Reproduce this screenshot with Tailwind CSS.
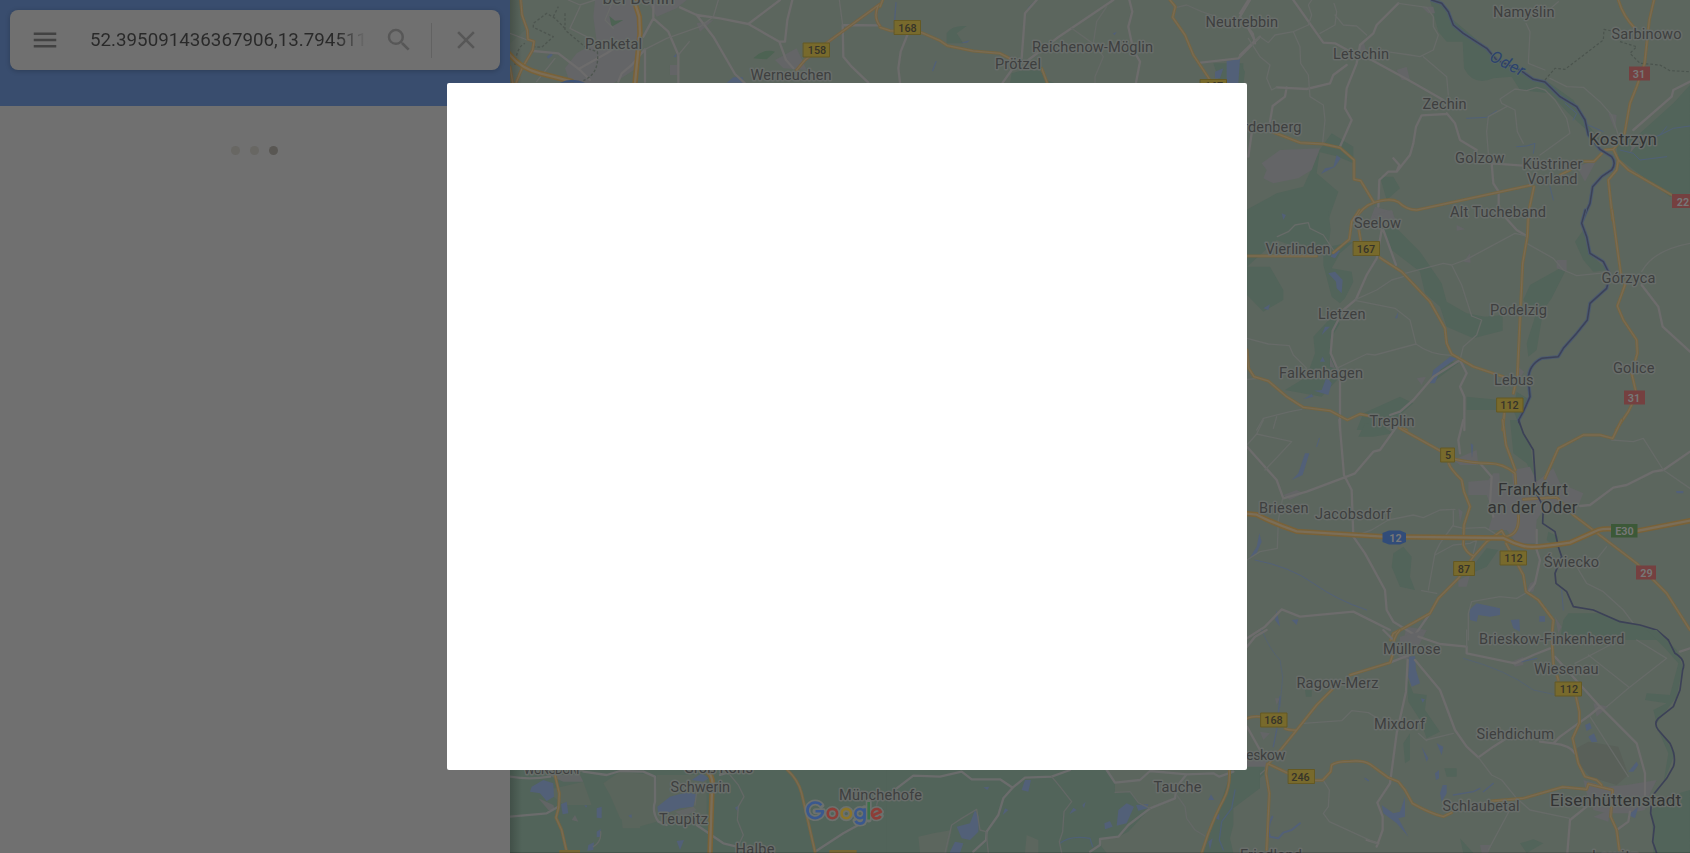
<!DOCTYPE html>
<html lang="en">
<head>
<meta charset="utf-8">
<title>Google Maps</title>
<script src="https://cdn.jsdelivr.net/npm/@tailwindcss/browser@4"></script>
</head>
<body class="relative flex h-screen w-screen overflow-hidden bg-[#707070] font-[Roboto,sans-serif]">

<aside class="h-full w-[510px] shrink-0 bg-[#707070]">
  <header class="h-[106px] bg-[#394d6e] p-[10px]">
    <div class="flex h-[60px] items-center rounded-lg bg-[#707070] pl-5 pr-[19px] shadow-[0_1px_5px_rgba(0,0,0,0.22)]">
      <svg class="size-[30px] shrink-0 fill-[#424242]" viewBox="0 0 24 24"><path d="M3 18h18v-2H3v2zm0-5h18v-2H3v2zm0-7v2h18V6H3z"/></svg>
      <div class="ml-[30px] w-[280px] overflow-hidden whitespace-nowrap bg-linear-to-r from-[#292929] from-88% to-[#707070] to-99% bg-clip-text text-[18.75px] leading-[30px] text-transparent">52.395091436367906,13.794511413</div>
      <svg class="ml-[14px] size-[30px] shrink-0 fill-[#575757]" viewBox="0 0 24 24"><path d="M15.5 14h-.79l-.28-.27A6.471 6.471 0 0 0 16 9.500 6.500 6.500 0 1 0 9.500 16c1.610 0 3.090-.59 4.230-1.570l.27.28v.79l5 4.990L20.490 19l-4.990-5zm-6 0C7.010 14 5 11.990 5 9.500S7.010 5 9.500 5 14 7.010 14 9.500 11.990 14 9.500 14z"/></svg>
      <div class="ml-[17px] h-[35px] w-px bg-[#626262]"></div>
      <svg class="ml-[19px] size-[30px] shrink-0 fill-[#575757]" viewBox="0 0 24 24"><path d="M19 6.410L17.590 5 12 10.590 6.410 5 5 6.410 10.590 12 5 17.590 6.410 19 12 13.410 17.590 19 19 17.590 13.410 12z"/></svg>
    </div>
  </header>
  <div class="flex justify-center gap-[10px] pt-[39.500px] pr-px">
    <i class="size-[9px] rounded-full bg-[#686763]"></i>
    <i class="size-[9px] rounded-full bg-[#686763]"></i>
    <i class="size-[9px] rounded-full bg-[#595753]"></i>
  </div>
</aside>

<main class="h-full flex-1 bg-[#5c665e]">
<svg class="block h-full w-full" viewBox="510 0 1180 853" fill="none" stroke-linejoin="round" stroke-linecap="round">
<defs>
  <linearGradient id="edge"><stop offset="0" stop-opacity=".2"/><stop offset="1" stop-opacity="0"/></linearGradient>
  <path id="o-nw" d="M62 0L66 45 82 90 84 118 102 124 98 150 66 205 48 248M30 200L38 248M1140 12L985 125M985 125L915 180 890 210M1136 15Q1118 50 1140 78"/>
  <path id="a-nw" d="M402 0L418 50 420 100 405 248M26 160Q60 205 120 220T215 244"/>
  <path id="o-n" d="M0 82L30 92 125 98 180 122 202 137 280 153 360 160 395 178M485 205L502 250M870 0L886 20 878 52 915 105 940 165 990 240M8 0L0 20"/>
  <path id="o-ne" d="M98 396L180 428 250 432 300 443 342 480 342 538 362 542 402 608M345 660Q365 620 402 608 450 592 475 606 500 630 530 630L875 555M1135 0Q1150 50 1185 85M1242 0L1228 60 1214 190 1190 260 1170 310 1152 410 1120 448 1095 450 1062 484 1010 484M1120 448L1135 480 1165 510 1295 585M1135 480L1130 510 1105 540 1118 660M960 525L990 510M882 560L868 625"/>
  <path id="o-e" d="M358 0L335 35 328 88 280 128M230 138H21M355 50L362 92M420 143L485 185 570 275 615 355 620 400 635 432 700 470 790 500M865 20L862 80 848 160 832 500 820 550M793 610L788 660M1116 0L1142 188 1155 225 1132 288 1150 330 1190 390 1192 430 1175 490 1190 555 1165 605 1128 660M21 420L26 475 42 500 85 513 140 560 190 592 270 602 322 630 360 612 400 620M478 652L500 660"/>
  <path id="o-se" d="M480 25L600 92M645 118Q700 130 745 130T825 160L828 205M788 0L798 75 826 150M626 130Q630 145 665 180L672 215 690 260 672 315 670 375Q680 400 700 408M835 285Q840 345 795 350L785 332 740 365 700 410 655 475 595 535 570 580 490 625 460 640 452 660M798 370L850 465 858 515 895 540 940 600 935 660M1145 0L1118 55 1080 45 1030 45 955 85 915 175M850 238L950 232 1000 285 1190 430 1280 520 1350 630"/>
  <path id="a-se" d="M21 281L50 284Q100 310 170 334L430 350 790 354Q820 370 850 378T990 368L1075 330Q1090 325 1120 327M1190 333L1350 302"/>
  <path id="o-s" d="M480 0Q455 25 458 75L450 98 330 135M280 175L230 225 170 300 120 362 85 402 145 430M225 451L248 451 272 425 275 405Q290 394 330 394 370 390 390 403L445 443 475 455 495 480 517 520Q570 550 610 560L635 548M21 265Q35 258 60 260M135 296Q150 302 170 300M82 402L78 430 88 490 80 660M745 514L850 505 968 471 1040 478 1045 462 1118 480 1112 560 1130 600 1138 660M935 10L940 100 955 150M1008 200L1018 245 1018 280 998 325 1015 400 1035 440 1070 450 1085 465"/>
  <path id="o-sw" d="M165 60L178 115 176 158 168 188 185 225 200 290M862 45Q895 75 905 115L945 290"/>
  <path id="a-sw" d="M622 50Q642 65 636 105L630 294"/>
  <path id="o-ss" d="M1048 45Q1052 95 1030 135T985 235L965 294"/>
  <path id="r-ne" d="M575 0L605 10 625 35 640 75 670 100 740 145 770 180 840 210 880 238 915 246 960 290 1010 320 1035 360 1045 405 1080 448 1115 470Q1130 490 1115 510L1085 530 1058 560 1050 610 1028 660"/>
  <path id="r-e" d="M1036 0L1025 40 1040 80 1050 130 1090 155 1110 195 1100 235 1050 280 1042 330 1010 370 970 415 955 440 905 445Q865 465 865 510L870 560 850 605 836 630 838 660"/>
</defs>

<!-- north west -->
<g transform="translate(500 0) scale(.33333)">
  <path fill="#58655c" d="M30 0H60L75 90 30 130z"/>
  <path fill="#646567" d="M285 0H410L430 120 410 205 340 250H210L195 205 230 160 290 125 280 50zM440 0H560L530 25 470 50zM825 180L890 145 920 210 850 205zM510 195H535V225H510zM590 70L640 60 600 95z"/>
  <path fill="#4d6353" d="M328 48L345 62 370 60 335 80zM760 175Q790 145 825 155L800 178z"/>
  <path fill="#526078" d="M680 248L700 232H728L732 248zM140 170L155 158 158 166 145 176zM520 170L530 160 528 172z"/>
  <g stroke="#6d6c6c" stroke-width="7"><path d="M460 0V55L505 95 535 165V250M460 55L430 110M540 22L590 45 660 55 745 72 840 0M590 45L640 110 705 222 735 250M745 72L838 125 858 180 880 205M877 0L862 60 855 125 838 125M1028 75L1030 170 1055 200 1105 248M1028 75L1140 76M100 153L175 160 240 210M240 210L270 240M240 205L320 160 350 140M355 245L365 220 395 195 435 148V245"/></g>
  <g stroke="#696b69" stroke-width="4"><path d="M205 0L240 15 285 0M240 20L210 85 260 110M340 0L315 60 340 85M435 148L500 115 600 80 640 50 655 0M1018 0L1028 75M110 245L165 175M535 165L568 125M30 100L82 120"/></g>
  <g stroke="#4e5650" stroke-width="4" stroke-dasharray="8 6" stroke-linecap="butt"><path d="M45 195Q50 140 75 130M160 50L175 20M195 85L165 55 140 40 100 70 100 82 160 110 125 142 100 140M195 40V90L260 145 292 155Q300 220 250 242"/></g>
  <use href="#o-nw" stroke="#756241" stroke-width="9"/><use href="#o-nw" stroke="#7a6b52" stroke-width="4"/>
  <use href="#a-nw" stroke="#7a6238" stroke-width="16"/><use href="#a-nw" stroke="#7b6d56" stroke-width="7"/>
  <path fill="#3d5275" d="M180 248Q215 230 255 248z"/>
</g>

<!-- north -->
<g transform="translate(880 0) scale(.33333)">
  <path fill="#52645a" d="M200 100Q215 75 260 78L230 100 250 130 200 130zM395 220L430 210 480 212 500 240 525 250H390zM1000 190H1090V250H1020z"/>
  <path fill="#526078" d="M1040 182L1080 178 1075 250H1040zM1005 215L1030 205 1020 235 1005 235zM698 100L710 96 704 106zM240 130L270 120 262 128z"/>
  <path stroke="#526078" stroke-width="4" d="M48 8L44 60M168 185L158 212M470 0L445 25"/>
  <g stroke="#6d6c6c" stroke-width="7"><path d="M470 0L435 40 425 175M445 180L530 115 700 0M395 210L368 248M82 105L62 155 55 205 60 248M748 0L757 35 745 80 760 150 780 185 768 248M962 188L1075 175 1140 110M1110 0L1080 50 1118 100 1125 130"/></g>
  <g stroke="#656966" stroke-width="4"><path d="M575 85L635 128M680 20L650 65 640 130 670 170 645 230V248M890 22L920 15 965 35 1010 50"/></g>
  <use href="#o-n" stroke="#756541" stroke-width="9"/><use href="#o-n" stroke="#7a6b52" stroke-width="4"/>
</g>

<!-- north east -->
<g transform="translate(1240 0) scale(.33333)">
  <g fill="#52645a">
    <path d="M570 0H600L640 60 700 110 780 180 860 225 930 250 1000 300 1040 370 1090 430 1050 400 985 340 930 280 840 270 815 230 760 235Q700 260 672 205L668 125 620 125 595 95zM1350 255L1300 310 1200 400 1130 440 1135 475 1290 590 1350 580zM235 455L275 400 340 440V490L295 470zM0 640L110 580 190 560 240 450 230 520 295 575 265 660H0zM420 530H460L480 565 440 600zM0 190L15 215 10 250H0z"/></g>
  <path fill="#646567" d="M65 490L120 450 240 445 215 510 175 535 100 550 70 535 80 510zM370 120L380 160 350 165zM470 210L500 200 510 240 485 240zM545 20H580L585 40 565 40zM405 620L460 635 450 660H390zM1010 500L1070 480 1035 545zM1105 340L1130 345 1125 390zM1180 420L1220 400 1170 460z"/>
  <path fill="#526078" d="M243 522L255 505 280 500 290 465 302 475 285 500z"/>
  <g stroke="#4f6078" stroke-width="3"><path d="M680 355L740 352 770 332M830 440L860 438 885 430 880 460M1140 450L1180 460 1200 480 1280 470M1220 420L1260 405 1300 385 1350 378M975 310L1010 340 1000 360M1045 375L1090 395M930 560L940 600M1260 405L1280 380"/></g>
  <g stroke="#6d6c6c" stroke-width="7"><path d="M160 0L250 128 285 130 355 168 395 180 505 240 610 300M475 10L410 75 400 100 360 135 350 190 320 265 315 325 335 360 300 440M320 195L280 225 270 250 200 267 110 262M0 165L45 122 25 85M0 40L25 0M140 262L135 290 98 318 90 365M620 342L545 346 528 380 520 430 510 465 470 515 445 515 418 540 415 620M620 340L645 370 660 420 710 450M755 490L760 550 776 575V620M755 490L850 497M1350 245L1300 270 1295 290 1180 390M460 475L478 495 470 515M35 400L25 470"/></g>
  <g stroke="#676b68" stroke-width="4"><path d="M475 10L560 22 580 50 580 80 595 105 580 150 540 170 510 165 440 155 380 158M550 170L620 230 625 285M160 95L180 140 182 190 205 225 210 290 250 315 255 360 248 428M25 115L60 170 90 195 80 235 95 270 110 262M45 122L60 110 85 128 105 105 160 95 205 75 215 45 205 15 215 0M240 100L285 75 290 35 282 10M285 45L310 75 350 78 380 105M955 5L920 35M858 70L870 95 865 190 915 210M930 235L980 260 1030 262 1080 305 1115 345 1135 405M915 270L890 262 860 272 825 267 780 297 785 310 825 330 832 395 850 430M915 270L945 300 980 355 990 400 900 465M800 320L745 350 740 395 745 460"/></g>
  <g stroke="#4b544e" stroke-width="3.500" stroke-dasharray="8 6" stroke-linecap="butt"><path d="M915 240L945 205 975 208 1090 120 1092 88 1125 95M1140 125L1190 140 1170 160 1200 190 1260 195 1290 212 1350 215"/></g>
  <use href="#o-ne" stroke="#756541" stroke-width="9"/><use href="#o-ne" stroke="#7a6b52" stroke-width="4"/>
  <use href="#r-ne" stroke="#4c5b71" stroke-width="10"/><use href="#r-ne" stroke="#3c4157" stroke-width="4.500"/>
</g>

<!-- east -->
<g transform="translate(1240 210) scale(.33333)">
  <g fill="#52645a"><path d="M21 0H265L272 60 265 110 340 95 300 130 275 175 335 185 340 215 315 265 300 280 275 260 250 165 250 130 190 120 110 90 21 170zM21 170H90L130 240V270L70 305 21 255zM430 55H470L540 125 605 220 620 275 680 310 735 320 788 315V362L700 385 620 350 600 290 555 250 540 185 455 120zM850 270L870 225 960 175 975 185 935 265 910 300 890 420 865 440 860 400 885 320zM1005 95L1030 60 1045 130 1105 180 1060 185 1030 150zM220 380L275 320 300 340 270 390 275 440 300 500 245 560 135 540 200 500 225 430zM575 520L620 450 655 460 600 500zM370 610L480 560 520 580 430 660H350zM680 560L780 570V600H680zM830 545L870 570 835 640 820 600z"/></g>
  <path fill="#646567" d="M400 15L455 0 470 40H420zM650 62V45L675 58zM670 155L690 130 692 158zM950 150H980V185L950 175zM530 505L558 500 545 525zM835 470L852 485 840 505zM270 440L285 475 270 470z"/>
  <path fill="#526078" d="M265 190L285 185 308 210 305 250 290 235 288 215zM70 295L90 283 85 300zM272 140L285 118 300 122 285 145zM190 568L215 552 220 560zM222 542L245 540 260 500 275 520 265 555zM570 520L580 480 630 440 650 445 600 480 585 520zM130 30L125 10 138 15zM465 325L475 305 472 325zM245 375L255 350 270 350zM240 455L248 440 255 455z"/>
  <g stroke="#6d6c6c" stroke-width="7"><path d="M425 60L410 145 380 195 348 268 310 300 278 362 272 430 300 495V660M430 60L468 165M785 10L830 60 860 78M1205 225L1255 290 1268 350 1350 425M660 450L580 500 520 570 480 605 450 615M660 450L680 490 660 530 673 560V660"/></g>
  <g stroke="#676b68" stroke-width="4"><path d="M495 190L610 160 635 165 680 148 825 70 860 78M860 100L940 145 970 180 1010 197 1100 188M635 165L665 225 695 318 725 330 710 375 670 410 660 450M348 268L410 240 455 210 490 200M348 272L465 295 510 330 528 402M528 402L405 435 380 432 290 475M528 402Q570 435 635 436M21 385L85 402 148 407 160 435 200 475M21 508L60 505M50 660L70 625 150 605 185 598M110 620L100 655M112 80L145 65 165 45 205 38 210 55 250 75 280 120M1205 185Q1240 120 1350 100"/></g>
  <use href="#o-e" stroke="#756541" stroke-width="9"/><use href="#o-e" stroke="#7a6b52" stroke-width="4"/>
  <use href="#r-e" stroke="#4c5b71" stroke-width="10"/><use href="#r-e" stroke="#3c4157" stroke-width="4.500"/>
</g>

<!-- Frankfurt area -->
<g transform="translate(1240 420) scale(.33333)">
  <g fill="#52645a"><path d="M355 50L375 10 430 20 460 40 400 50zM830 0L870 70 885 180 860 130 820 100 810 0zM460 400L490 380 515 410 510 470 525 510 480 500 455 440zM705 430L740 385 775 390 740 440 705 455zM925 335L955 350 950 385 920 360zM970 600L985 580 1080 580 1150 605 1250 630 1280 660H960z"/></g>
  <path fill="#646567" d="M815 150L870 140 890 185 940 145 960 190 1030 220 1010 270 910 270 890 300 885 370H830L800 330H745L760 280 740 225 685 225V185L745 180 760 160 778 160 780 190 820 200zM130 225L170 210 190 220 150 240zM655 480L690 465 680 500H655zM655 265L668 275 660 310zM640 120L710 90 715 135 660 135zM870 490L890 480 880 515H860zM945 590L965 620 955 640zM500 620L560 630 535 660H490z"/>
  <path fill="#526078" d="M688 570L710 550 780 565V585L750 590 715 585 710 605 690 600zM812 600L838 598 840 635 820 625zM898 588H915V605H898zM155 180L175 160 195 100H208L188 165zM58 340L65 365 50 400 25 420 50 380zM110 570L120 620 105 600zM155 600L175 598 170 615zM692 70L700 75 696 115zM1308 213H1330V220H1310z"/>
  <path stroke="#526078" stroke-width="3" d="M230 80L238 55M45 420Q150 440 220 490T380 570M965 510L970 570"/>
  <g stroke="#6d6c6c" stroke-width="7"><path d="M21 80L65 130 110 180 130 235 200 215 320 170 345 160 400 95 420 90 470 20M298 0L312 165 335 210 340 350 375 400 435 510 440 570 460 605 525 645M21 655L75 620 125 568 180 590 340 575 450 630M525 645L570 580M1020 258L1050 255 1120 203 1160 195 1240 155 1270 150 1350 95M890 330L890 390 900 420 885 490 865 515M670 0L655 60 660 100M720 130L755 170 750 250 760 290"/></g>
  <g stroke="#676b68" stroke-width="4"><path d="M21 75L50 42 155 65 75 150M50 42L70 0M128 235L115 300 112 385 60 395 21 420M340 350L395 330 445 300 520 285 550 293 600 270 645 268M640 270V315L600 370 585 400 565 510M640 318L670 325 735 322 780 350M685 660V580L695 545 780 530 830 535 865 515M1115 60L1180 65 1210 55 1270 150 1350 205M1100 380L1060 430 1010 440 1040 490 1090 515 1150 570 1180 610M545 512L590 520M585 405L640 375 690 370 710 360 700 400"/></g>
  <use href="#o-se" stroke="#756541" stroke-width="9"/><use href="#o-se" stroke="#7a6b52" stroke-width="4"/>
  <path stroke="#3c4157" stroke-width="5" d="M836 0L850 40 880 90 886 180V215L910 260 908 310 945 335 955 380 965 410 945 460 948 490 980 515 1000 560 1060 570 1140 605 1200 615 1250 630 1285 660"/>
  <use href="#a-se" stroke="#7a6238" stroke-width="16"/><use href="#a-se" stroke="#7b6e58" stroke-width="7"/>
</g>

<!-- south east -->
<g transform="translate(1240 630) scale(.33333)">
  <g fill="#52645a"><path d="M1220 0H1250L1310 60 1328 110 1310 200 1250 280 1240 240 1280 220 1215 210 1220 190 1290 195 1315 100 1280 60zM1235 540L1280 500 1350 480V669H1240zM500 140L520 190 560 195 555 240 600 305 560 325 540 270 505 215zM490 340L510 310V390L495 400zM0 420L70 390 75 430 0 500zM613 415H650V440H620zM195 180H215V200H198zM840 640L880 628 910 640 860 669zM1250 290L1305 370 1270 460 1285 370zM660 625L700 669H670z"/></g>
  <path fill="#596059" d="M1010 355L1045 335 1135 350 1165 435 1130 465 1050 440 1015 400z"/>
  <path fill="#646567" d="M1060 220L1105 230 1070 260zM1030 450L1100 470 1160 465 1250 450 1230 490 1215 540 1170 550 1100 550 1060 540 1040 490zM1060 560L1110 540 1105 575zM60 305L90 310 70 330zM105 205H120L110 225zM480 20L560 0 540 40 500 90 475 80zM720 645H755L745 669H725zM815 95L850 80 850 105 825 110zM0 380L80 370V410H0z"/>
  <path fill="#526078" d="M507 80L525 78 528 120 540 160 515 170 505 140zM1035 285L1050 278 1055 295 1040 303zM1045 320L1062 310 1072 335 1055 337zM1165 425L1190 395 1195 405 1180 425zM600 490L608 465 620 465V490L605 515zM585 430L597 420V445L588 450zM545 350L565 385 560 395zM590 340L610 350 605 375zM1165 555L1195 530 1185 565zM425 525L460 550 480 545 495 500V560L475 565 505 620 470 580 430 550zM542 205L555 208 548 218z"/>
  <g stroke="#526078"><path stroke-width="6" d="M97 560Q80 590 90 620L115 625 130 608 155 600 180 580"/><path stroke-width="4" d="M640 495L700 485 720 475M730 485L760 460M375 445L385 452M845 95L890 85M100 350L110 300 120 200"/><path d="M65 0Q90 60 120 90L128 140 120 230M670 85Q800 120 880 180L950 195" stroke-width="2"/></g>
  <g stroke="#6d6c6c" stroke-width="7"><path d="M503 90L498 185 470 310 450 460 412 518 428 560V600L410 650M525 90L600 180 645 300 680 350 715 382 760 350 800 325M900 335L940 340 960 320 1050 255 1080 230 1190 340 1215 430V500M940 340Q990 345 1005 370M535 20L600 42 680 50V70L825 100 880 75 930 55M945 80L1080 230M1040 530L990 570 982 669M450 98L520 70M430 0L460 30M21 50L45 20 80 0M21 290L60 360M1350 55L1320 65M1170 545L1165 575 1130 600M380 630L415 640"/></g>
  <g stroke="#676b68" stroke-width="4"><path d="M190 280L305 272 335 242 385 248 445 285M558 330L640 310M535 310L560 332M715 382L755 435 785 450 830 505 870 540 990 565M250 451L268 480 265 530 250 550 268 575 410 640M820 520L745 660M1100 230L1165 175 1280 85 1190 30M1045 75L1165 170M1005 100L1110 45M1050 260L1165 440M0 510L40 450 75 420M680 0V50"/></g>
  <use href="#o-s" stroke="#756541" stroke-width="9"/><use href="#o-s" stroke="#7a6b52" stroke-width="4"/>
  <path stroke="#3c4157" stroke-width="5" d="M1285 30L1305 70Q1340 90 1328 120L1320 180 1300 230 1255 265Q1240 280 1255 300L1290 340Q1310 380 1300 410L1280 445 1235 500 1232 550 1243 590 1238 635 1250 669"/>
</g>

<!-- south west -->
<g transform="translate(500 755) scale(.33333)">
  <path fill="#52645a" d="M30 45H1200V294H30z"/>
  <path fill="#5a655c" d="M310 85L360 50 465 60 470 200 400 220 360 190 330 120zM470 60H620V190L560 200 480 210 465 170zM120 90L165 100 250 80 275 150 190 150zM365 190H420V220H368z"/>
  <path fill="#626565" d="M115 130L160 150 165 165 145 165zM215 195L225 180 235 200zM145 60H240L250 80 190 80zM525 170L580 155 590 165 550 185z"/>
  <path fill="#526078" d="M95 95L130 75 160 85 162 125 140 138 120 115 90 110zM472 155L510 125 560 112 590 118 580 155 540 160 500 175 475 175zM575 75L605 55 625 70 610 80zM183 148L200 140 205 175 188 178zM290 160L305 155V190L290 188zM265 270L282 262 280 285 262 288zM290 230L302 222V245L290 247zM530 258L552 255 540 285zM385 182L395 178 395 190zM253 150L262 152 258 158zM705 158L718 150 712 168z"/>
  <g stroke="#6b6c6c" stroke-width="7"><path d="M30 65Q90 75 150 65M30 185L140 175 175 155M250 50L320 60 360 48 430 50 465 65V140Q455 170 475 200L500 210M590 210L670 265 710 275M660 60L700 48M945 290L1030 235 1075 210"/></g>
  <path stroke="#646866" stroke-width="4" d="M690 60L715 90 732 125 715 155 712 195 730 240 718 265M302 230Q305 260 280 275M1130 150L1135 130 1200 80M610 85L590 110 585 150"/>
  <use href="#o-sw" stroke="#756541" stroke-width="9"/><use href="#o-sw" stroke="#7a6b52" stroke-width="4"/>
  <use href="#a-sw" stroke="#7a6238" stroke-width="16"/><use href="#a-sw" stroke="#7b6e58" stroke-width="7"/>
  <path fill="#756635" d="M178 285H240V294H178zM988 285H1070V294H988z"/>
</g>

<!-- south -->
<g transform="translate(880 755) scale(.33333)">
  <path fill="#52645a" d="M20 45H1140V294H20z"/>
  <path fill="#5c665e" d="M680 45L705 85V115L750 110 775 140 810 160 745 230 715 245 660 250 665 275 680 294H970L1045 75 1060 45zM1140 100L1060 160 1060 210 1050 250 1060 294H1140zM115 245L160 235 215 225 200 294H120zM440 240L475 255V294H435z"/>
  <path fill="#526078" d="M230 215L270 205 285 165 297 185 295 230 270 255 245 250zM210 290L225 260 250 265 240 294H210zM425 105L435 75 453 75 445 110zM715 165L740 145 762 155 740 205 710 212zM768 150L805 147 803 160 775 167zM673 205L690 198 698 215 675 223zM368 180L375 160 385 165zM568 178L580 158 590 165zM985 135L993 118 1003 135zM310 97L328 95 322 105zM607 150L617 140 612 160zM985 260L998 250 990 285zM1005 190L1018 175V195z"/>
  <path stroke="#4e6076" stroke-width="4" d="M1065 105L1055 160 1025 200 1018 255 1030 285M540 265Q570 240 630 250L638 275"/>
  <g stroke="#6b6c6c" stroke-width="7"><path d="M50 100L100 62 180 65 245 50 275 73 360 73 398 98 435 68 515 65 570 45M398 98L370 130 355 180 320 230 318 255 280 290M680 45L705 83 780 75 810 48 920 58 1000 55 1018 65 1060 50M920 58L890 95 885 130 810 160 745 210 715 245 660 252 660 270 630 290"/></g>
  <path stroke="#646866" stroke-width="4" d="M195 294L215 210 245 190 290 163 300 225 318 230 325 294M515 65L540 95 575 140 552 170 548 230 538 260 545 294M890 120L915 155 920 190 945 225 975 243M705 112L750 110 775 143 810 160"/>
  <use href="#o-ss" stroke="#756541" stroke-width="9"/><use href="#o-ss" stroke="#7a6b52" stroke-width="4"/>
</g>

<!-- place names -->
<g class="font-[Roboto,sans-serif]" fill="#3e3f3f" stroke="#686d6a" stroke-width="3" paint-order="stroke" font-size="14.600">
  <text x="602.500" y="3.500" font-size="17" textLength="72">bei Berlin</text>
  <text x="585" y="49" textLength="57">Panketal</text>
  <text x="750.500" y="80" textLength="81">Werneuchen</text>
  <text x="1032" y="51.500" textLength="121">Reichenow-Möglin</text>
  <text x="995" y="69" textLength="46">Prötzel</text>
  <text x="1205.500" y="26.500" textLength="72.500">Neutrebbin</text>
  <text x="1493" y="16.500" textLength="61.500">Namyślin</text>
  <text x="1611.500" y="39" textLength="70">Sarbinowo</text>
  <text x="1333" y="59" textLength="56">Letschin</text>
  <text x="1422.500" y="109" textLength="44">Zechin</text>
  <text x="1226" y="131.500" textLength="75.500">Bardenberg</text>
  <text x="1455" y="163" textLength="49.500">Golzow</text>
  <text x="1522.500" y="169" textLength="60">Küstriner</text>
  <text x="1527" y="184" textLength="50.500">Vorland</text>
  <text x="1450" y="216.500" textLength="96">Alt Tucheband</text>
  <text x="1354" y="228" textLength="47">Seelow</text>
  <text x="1265.500" y="254" textLength="65">Vierlinden</text>
  <text x="1601.500" y="283" textLength="54">Górzyca</text>
  <text x="1490" y="315" textLength="57">Podelzig</text>
  <text x="1318" y="319" textLength="47.500">Lietzen</text>
  <text x="1613" y="372.500" textLength="41.500">Golice</text>
  <text x="1279" y="377.500" textLength="84">Falkenhagen</text>
  <text x="1494" y="385" textLength="39.500">Lebus</text>
  <text x="1369.500" y="425.500" textLength="45">Treplin</text>
  <text x="1259" y="512.500" textLength="49.500">Briesen</text>
  <text x="1315" y="519" textLength="76">Jacobsdorf</text>
  <text x="1544" y="566.500" textLength="55">Świecko</text>
  <text x="1479" y="644" textLength="145.500">Brieskow-Finkenheerd</text>
  <text x="1383" y="654" textLength="57.500">Müllrose</text>
  <text x="1534" y="674" textLength="64.500">Wiesenau</text>
  <text x="1296.500" y="687.500" textLength="82">Ragow-Merz</text>
  <text x="1374" y="729" textLength="51">Mixdorf</text>
  <text x="1476.500" y="739" textLength="77.500">Siehdichum</text>
  <text x="1230.500" y="760" textLength="55">Beeskow</text>
  <text x="1442.500" y="811" textLength="77">Schlaubetal</text>
  <text x="1153.500" y="791.500" textLength="48">Tauche</text>
  <text x="839" y="800" textLength="83">Münchehofe</text>
  <text x="670.500" y="791.500" textLength="59.500">Schwerin</text>
  <text x="659" y="823.500" textLength="49">Teupitz</text>
  <text x="735.500" y="854" textLength="39">Halbe</text>
  <text x="684" y="773" textLength="69">Groß Köris</text>
  <text x="524" y="774" font-size="12" textLength="59">WÜNSDORF</text>
  <text x="1240" y="860" textLength="62">Friedland</text>
  <text x="1592" y="861" textLength="46">Lawitz</text>
  <g fill="#323333" font-size="17">
    <text x="1589" y="144.500" textLength="68">Kostrzyn</text>
    <text x="1498" y="495" textLength="70">Frankfurt</text>
    <text x="1487.500" y="512.500" textLength="90">an der Oder</text>
    <text x="1550" y="806" textLength="131">Eisenhüttenstadt</text>
  </g>
  <text transform="translate(1488.500 60) rotate(27)" fill="#2c426d" stroke="#596963" stroke-width="1.500" font-size="16.500" font-style="italic" textLength="37">Oder</text>
</g>

<!-- road shields -->
<g stroke="#655923" fill="#786a2c">
  <path d="M803.500 43h26v14h-26zM894.500 20.500h26v14h-26zM1200.500 79.500h26v14h-26zM1353.500 241.500h26v14h-26zM1497 398h26v14h-26zM1441 448h13.500v14H1441zM1500.500 551h26v14h-26zM1454 561.500h20.500v14H1454zM1555.500 682h26v14h-26zM1261 713h26v14h-26zM1288.500 769.500h26v14h-26z"/>
  <g fill="#754040" stroke="none"><path d="M1629 66.500h21v14h-21zM1672 194h20v14h-20zM1624 390.500h21v14h-21zM1636 565.500h20v14h-20z"/></g>
  <path fill="#3c5938" stroke="none" d="M1611 524h26.500v13.500H1611z"/>
  <path fill="#314c79" stroke="none" d="M1382.500 533L1389 530.500h11l6 2.500v9l-6 2.500h-11l-6.500-2.500z"/>
</g>
<g class="font-[Roboto,sans-serif]" font-size="10.800" font-weight="500" fill="#36342a" text-anchor="middle">
  <text x="817" y="54">158</text><text x="907.500" y="31.500">168</text><text x="1214" y="89.500">167</text><text x="1366" y="253">167</text><text x="1509.500" y="409">112</text><text x="1448" y="459">5</text><text x="1513.500" y="561.500">112</text><text x="1464" y="573">87</text><text x="1569" y="693">112</text><text x="1273.500" y="724">168</text><text x="1300.500" y="780.500">246</text>
  <g fill="#777" font-weight="700"><text x="1639" y="78">31</text><text x="1683" y="205.500">22</text><text x="1634" y="401.500">31</text><text x="1646.500" y="576.500">29</text><text x="1624.500" y="534.500">E30</text><text x="1395.500" y="541.500">12</text></g>
</g>

<!-- Google logo: light halo, then the coloured marks -->
<defs>
  <path id="logo-G" d="M821.300 805.300A7.800 7.800 0 1 0 823 811.300H815.500"/>
  <circle id="logo-o1" cx="832.400" cy="813.600" r="4.700"/>
  <circle id="logo-o2" cx="846.300" cy="813.600" r="4.700"/>
  <path id="logo-g" d="M864.600 808.300V818.500Q864.600 823.600 860 823.600 856.800 823.600 855.600 820.800M864.600 813.600A4.600 4.600 0 1 1 855.400 813.600A4.600 4.600 0 1 1 864.600 813.600"/>
  <path id="logo-l" d="M868.700 802V819.500"/>
  <path id="logo-e" d="M880.700 816A4.700 4.700 0 1 1 880.900 811.700L873 815.200"/>
</defs>
<g stroke="#6c716e" stroke-width="6">
  <use href="#logo-G"/><use href="#logo-o1"/><use href="#logo-o2"/><use href="#logo-g"/><use href="#logo-l"/><use href="#logo-e"/>
</g>
<g stroke-width="2.600" stroke-linecap="butt">
  <use href="#logo-G" stroke="#3a588e"/><use href="#logo-o1" stroke="#8c3e38"/><use href="#logo-o2" stroke="#8b7429"/><use href="#logo-g" stroke="#3a588e"/><use href="#logo-l" stroke="#3d7149"/><use href="#logo-e" stroke="#8c3e38"/>
</g>
<path fill="url(#edge)" d="M510 0h12v853h-12z"/>
<path fill="#000" fill-opacity=".15" d="M510 852h1180v1H510z"/>
</svg>
</main>

<div role="dialog" aria-modal="true" class="absolute left-[447px] top-[83px] h-[687px] w-[800px] rounded-[2px] bg-white"></div>
</body>
</html>
